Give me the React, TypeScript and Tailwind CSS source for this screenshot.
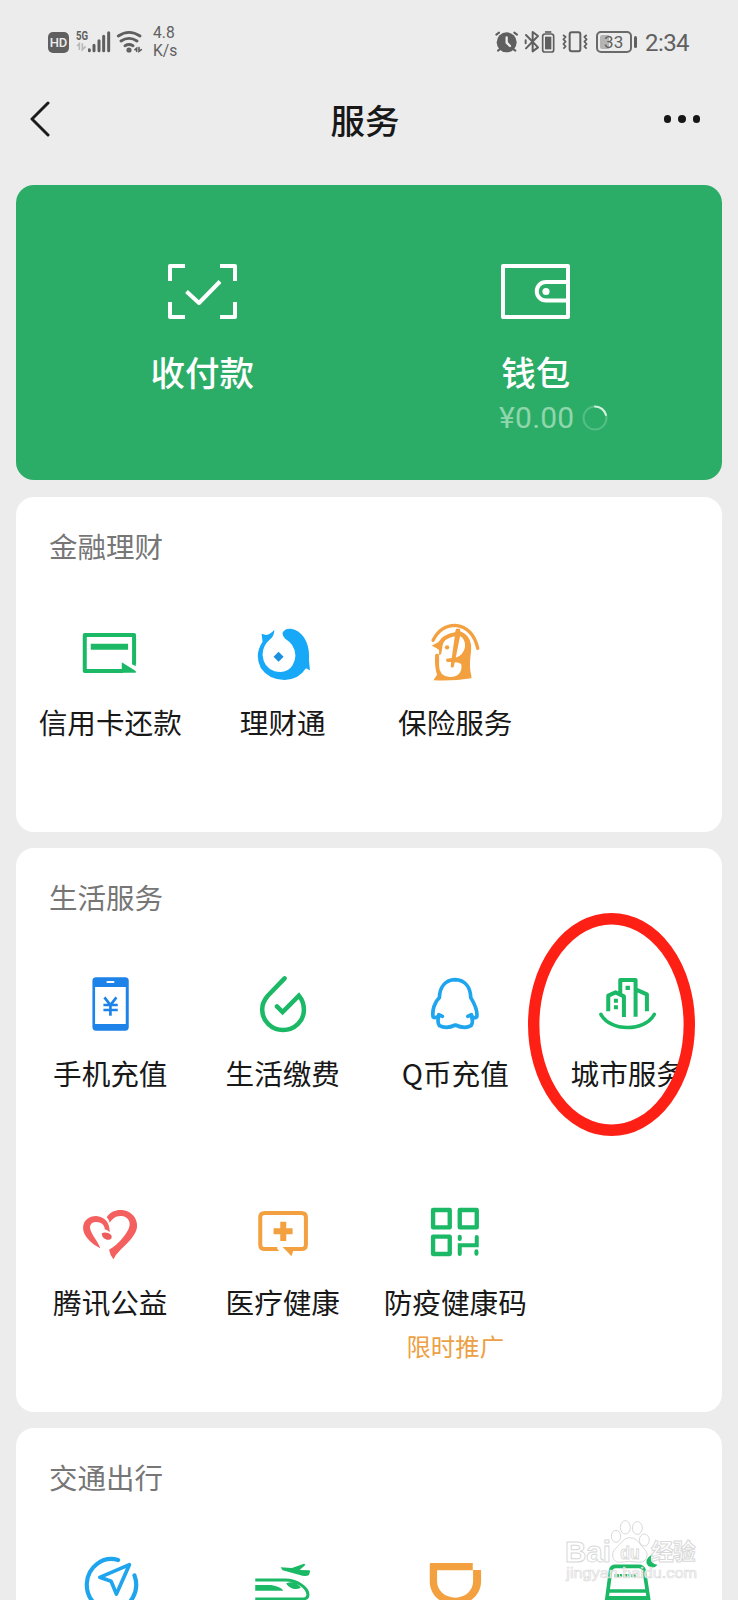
import type { ReactNode } from "react";

interface IconProps {
  viewBox: string;
  children: ReactNode;
}

const ServiceIcon = ({ viewBox, children }: IconProps) => (
  <svg viewBox={viewBox} className="h-[60px] w-[60px] overflow-visible" fill="none">
    {children}
  </svg>
);

const GREEN = "#1bb866";
const BLUE = "#1ea5ee";
const ORANGE = "#f3a040";

const CreditCardIcon = () => (
  <ServiceIcon viewBox="150.75 72 180 180">
    <path d="M313 193V105H165V213H280" stroke={GREEN} strokeWidth="12" strokeLinejoin="round" />
    <path d="M183 131H295V149H183Z" fill={GREEN} />
    <path d="M276 187L318 213V218H270V207H276Z" fill={GREEN} />
    <path d="M307 185L318 192V199L307 193Z" fill={GREEN} />
  </ServiceIcon>
);

const WealthIcon = () => (
  <ServiceIcon viewBox="668.25 72 180 180">
    <path
      d="M694 101L707 105Q722 102 732 89Q733 108 718 119Q696 138 697 166Q700 203 733 214Q770 223 787 196Q805 164 785 134Q777 124 765 116Q754 106 758 96Q765 85 782 86Q806 90 821 112Q839 141 836 178L839 211L827 205Q806 239 763 240Q716 240 692 205Q671 164 697 125Z"
      fill="#18a8f8"
    />
    <path d="M745 155L760 170L745 185L730 170Z" fill="#1b8fe0" />
  </ServiceIcon>
);

const InsuranceIcon = () => (
  <ServiceIcon viewBox="375.75 72 180 180">
    <path d="M400 121Q422 76 467 76Q520 82 534 145" stroke={ORANGE} strokeWidth="10" strokeLinecap="round" />
    <path
      d="M396 137L416 126Q430 103 466 97L469 86L481 86L481 94Q508 103 514 134Q515 152 512 170Q508 205 515 227V235Q460 244 401 241L412 224Q404 202 406 164Q412 158 418 164V150Q410 143 396 137Z"
      fill={ORANGE}
    />
    <path
      d="M428 139Q431 115 465 109L456 174L440 176Q437 182 442 186H454L453 200Q457 205 462 200L465 187Q482 188 485 194Q488 230 450 231Q418 228 418 197V165L424 163Q427 150 428 139Z"
      fill="#fff"
    />
    <path d="M481 108Q497 117 496 140Q492 164 468 173Z" fill="#fff" />
    <circle cx="442" cy="142" r="6.5" fill={ORANGE} />
  </ServiceIcon>
);

const PhoneIcon = () => (
  <ServiceIcon viewBox="150.75 75 180 180">
    <rect x="188" y="82" width="109" height="160" rx="11" fill="#1e83e8" />
    <path d="M196 111H288V222H196Z" fill="#fff" />
    <path d="M233 96H251" stroke="#fff" strokeWidth="6" strokeLinecap="round" />
    <path d="M224 142L242 165L260 142M242 165V197M221 165H264M221 180H264" stroke="#1e83e8" strokeWidth="8" />
  </ServiceIcon>
);

const UtilityIcon = () => (
  <ServiceIcon viewBox="668.25 75 180 180">
    <path
      d="M763 85L712 138C698 155 695 166 696 180A62.500 60 0 0 0 821 180Q821 155 806 137L757 186L740 169"
      stroke={GREEN}
      strokeWidth="13.5"
      strokeLinecap="round"
    />
  </ServiceIcon>
);

const QCoinIcon = () => (
  <ServiceIcon viewBox="165.75 225 180 180">
    <path
      d="M256 239C226 240 210 262 209 293C194 306 187 330 190 351Q195 356 208 347Q201 365 209 377Q230 388 257 375Q284 388 304 377Q312 365 304 347Q315 357 321 351Q325 329 303 293C302 262 286 240 256 239Z"
      stroke={BLUE}
      strokeWidth="11"
      strokeLinejoin="round"
    />
    <path d="M207 344L218 349M305 344L294 349" stroke={BLUE} strokeWidth="11" strokeLinecap="round" />
  </ServiceIcon>
);

const CityIcon = () => (
  <ServiceIcon viewBox="683.25 225 180 180">
    <path
      d="M714 334V287L736 277L761 289V351M750 281V240H796V350M796 268L830 283V334"
      stroke={GREEN}
      strokeWidth="12"
      strokeLinejoin="round"
    />
    <path d="M692 343C719 395 823 397 852 343" stroke={GREEN} strokeWidth="10.5" strokeLinecap="round" />
    <path d="M731 296H743V308H731ZM731 316H743V328H731ZM766 257H779V270H766Z" fill={GREEN} />
  </ServiceIcon>
);

const CharityIcon = () => (
  <ServiceIcon viewBox="150.75 42 180 180">
    <path
      d="M212 175C186 162 158 137 160 111C162 90 178 78 199 78C224 80 240 96 240 127Q233 119 225 118C225 104 212 95 199 96C186 96 180 104 181 114C183 132 203 151 212 175Z"
      fill="#f4605f"
    />
    <path
      d="M231 82C242 64 262 58 282 61C307 66 322 85 322 108C322 132 296 157 271 181Q257 195 251 208Q241 196 238 179C258 170 294 133 299 109C303 92 292 79 275 78C256 77 247 88 240 98Q237 88 231 82Z"
      fill="#f4605f"
    />
    <path d="M216 130Q224 125 235 129Q249 134 245 145Q240 153 226 147Q216 142 216 130Z" fill="#ee5b5b" />
  </ServiceIcon>
);

const MedicalIcon = () => (
  <ServiceIcon viewBox="668.25 42 180 180">
    <path d="M741 177H704Q690 177 690 164V82Q690 69 704 69H813Q827 69 827 82V164Q827 177 813 177H775" stroke={ORANGE} strokeWidth="12" />
    <path d="M757 171H792L784 199Z" fill={ORANGE} />
    <path d="M735 171L747 183H735Z" fill={ORANGE} />
    <path d="M759 95V153M730 124H787" stroke={ORANGE} strokeWidth="18" />
  </ServiceIcon>
);

const HealthCodeIcon = () => (
  <ServiceIcon viewBox="195.75 42 180 180">
    <path
      d="M220 60H270V112H220ZM300 60H351V112H300ZM220 140H270V192H220Z"
      stroke={GREEN}
      strokeWidth="13"
      strokeLinejoin="round"
    />
    <path d="M300 192V166H351V141M300 140V147M350 184V191" stroke={GREEN} strokeWidth="12" strokeLinecap="round" />
  </ServiceIcon>
);

const TravelIcon = () => (
  <ServiceIcon viewBox="150.75 345 180 180">
    <path d="M265 360A74 77 0 1 0 314 406" stroke={BLUE} strokeWidth="12.5" strokeLinecap="round" />
    <path d="M299 374L210 412L244 424L260 462Z" stroke={BLUE} strokeWidth="11" strokeLinejoin="round" />
  </ServiceIcon>
);

const TrainIcon = () => (
  <ServiceIcon viewBox="668.25 345 180 180">
    <path d="M675 420H765C800 420 833 444 833 464Q833 477 815 477H675" stroke={GREEN} strokeWidth="9" />
    <path d="M675 435H722Q752 440 759 452H675Z" fill={GREEN} />
    <path d="M768 430Q780 424 795 428L812 442Q806 450 788 446Q771 440 768 430Z" fill={GREEN} />
    <path d="M751 382L785 384L821 371L826 374L808 390L838 391Q841 394 836 405Q826 411 806 404L757 391Z" fill={GREEN} />
  </ServiceIcon>
);

const RideIcon = () => (
  <ServiceIcon viewBox="75.75 165 180 180">
    <path
      d="M94 189H219V210H244V244C244 285 210 314 167 314C122 314 90 285 90 244V193Q90 189 94 189ZM112 211V244C112 272 136 293 167 293C196 293 220 272 220 244V211Z"
      fill={ORANGE}
      fillRule="evenodd"
    />
  </ServiceIcon>
);

const CarIcon = () => (
  <ServiceIcon viewBox="593.25 165 180 180">
    <path d="M618 310L631 212Q633 199 646 199H715Q729 199 732 212L747 310M622 273H742" stroke={GREEN} strokeWidth="11" />
    <path d="M621 288H745V310H621Z" fill={GREEN} />
    <path d="M643 227H709" stroke={GREEN} strokeWidth="10" strokeDasharray="13 3 6 3" />
    <path d="M754 164Q745 190 772 194Q761 208 744 198Q728 180 754 164Z" fill={GREEN} />
  </ServiceIcon>
);

interface Service {
  name: string;
  icon: ReactNode;
  promo?: string;
}

const finance: Service[] = [
  { name: "信用卡还款", icon: <CreditCardIcon /> },
  { name: "理财通", icon: <WealthIcon /> },
  { name: "保险服务", icon: <InsuranceIcon /> },
];

const life: Service[] = [
  { name: "手机充值", icon: <PhoneIcon /> },
  { name: "生活缴费", icon: <UtilityIcon /> },
  { name: "Q币充值", icon: <QCoinIcon /> },
  { name: "城市服务", icon: <CityIcon /> },
  { name: "腾讯公益", icon: <CharityIcon /> },
  { name: "医疗健康", icon: <MedicalIcon /> },
  { name: "防疫健康码", icon: <HealthCodeIcon />, promo: "限时推广" },
];

// Only the top of this row is on screen, so its items carry no labels
const transportIcons = [TravelIcon, TrainIcon, RideIcon, CarIcon];

interface SectionProps {
  title: string;
  children: ReactNode;
}

const Section = ({ title, children }: SectionProps) => (
  <section className="relative mt-4 rounded-[18px] bg-white px-2 pt-[29px]">
    <h2 className="pl-[25px] text-[28.5px] leading-10 text-[#767676]">{title}</h2>
    {children}
  </section>
);

const ServiceGrid = ({ items }: { items: Service[] }) => (
  <div className="mt-[58px] grid auto-rows-[207.5px] grid-cols-4 gap-y-[22px]">
    {items.map((item) => (
      <div key={item.name} className="flex flex-col items-center whitespace-nowrap">
        {item.icon}
        <span className="mt-[18px] text-[28.6px] leading-10 text-[#181818]">{item.name}</span>
        {item.promo && <span className="mt-1 text-[24.4px] leading-10 text-[#eda045]">{item.promo}</span>}
      </div>
    ))}
  </div>
);

const StatusBar = () => (
  <div className="flex h-14 items-end justify-between pr-[49px] pl-12 text-[#606060]">
    <div className="flex h-7 items-center">
      <div className="mt-px flex h-[21px] w-[21px] items-center justify-center rounded-[5px] bg-[#5f5f5f] font-[Roboto] text-[13px] font-medium text-[#ececec]">
        HD
      </div>
      <div className="ml-[7px] flex h-7 w-[35px]">
        <div className="flex w-3 flex-col">
          <span className="mt-[2px] origin-left scale-x-[0.8] font-[Roboto] text-[12px] leading-[12px] font-bold">5G</span>
          <svg viewBox="228 132 36 30" className="h-[10px] w-3" fill="none" stroke="#b9b9b9" strokeWidth="5">
            <path d="M231 144L238 137V156M247 136V155L257 145" />
          </svg>
        </div>
        <svg viewBox="264 84 69 84" className="h-7 w-[23px]" stroke="#5f5f5f" strokeWidth="9" strokeLinecap="round">
          <path d="M268 149V152M282 136V152M297 122V152M311 109V152M326 98V152" />
        </svg>
      </div>
      <svg viewBox="348 84 81 84" className="ml-[5px] h-7 w-[27px]" fill="none" stroke="#5f5f5f" strokeWidth="8.5" strokeLinecap="round">
        <path d="M355 108Q387 86 420 108M363 123Q387 107 411 123M375 137Q387 130 399 137" />
        <circle cx="387" cy="150" r="3.5" />
        <path d="M405 149L410 145V154M417 143V154L424 149" strokeWidth="5" />
      </svg>
      <div className="ml-[10px] font-[Roboto] text-[15.6px] leading-[18px]">
        <div>4.8</div>
        <div>K/s</div>
      </div>
    </div>
    <div className="flex h-7 items-center">
      <svg viewBox="75 84 69 84" className="h-7 w-[23px]" fill="none" strokeLinecap="round">
        <circle cx="110" cy="127" r="30" fill="#5f5f5f" />
        <path d="M79 104L87 98M141 104L133 98M84 152L92 146M136 152L128 146" stroke="#5f5f5f" strokeWidth="6" />
        <path d="M110 112V128L120 138" stroke="#ececec" strokeWidth="7" />
      </svg>
      <svg viewBox="162 84 48 84" className="ml-[6px] h-7 w-4" fill="none" stroke="#5f5f5f" strokeWidth="6" strokeLinejoin="round">
        <path d="M168 105L204 142L188 154V96L204 108L168 145M167 121V130" strokeLinecap="round" />
      </svg>
      <svg viewBox="213 84 42 84" className="ml-px h-7 w-[14px]" fill="none" stroke="#5f5f5f">
        <rect x="218" y="102" width="33" height="54" rx="7" strokeWidth="5" />
        <path d="M225 96H244" strokeWidth="5" />
        <path d="M225 110H244V148H225Z" fill="#5f5f5f" stroke="none" />
      </svg>
      <svg viewBox="273 84 84 84" className="ml-[6px] h-7 w-7" fill="none" stroke="#5f5f5f" strokeLinejoin="round">
        <rect x="299" y="97" width="32" height="57" rx="6" strokeWidth="6" />
        <path d="M279 105L287 111L280 118L287 125L280 132L287 139L280 146M350 105L343 111L350 118L343 125L350 132L343 139L350 146" strokeWidth="5" />
      </svg>
      <div className="ml-[7px] flex items-center">
        <div className="flex h-[22px] w-[36px] items-center rounded-[5px] border-2 border-[#6a6a6a] p-[2px]">
          <div className="h-[14px] w-[9px] shrink-0 rounded-l-[2px] bg-[#b4b4b4]" />
          <span className="-ml-[5px] font-[Roboto] text-[17px] leading-none">33</span>
        </div>
        <div className="ml-[2px] h-3 w-[3px] rounded-sm bg-[#606060]" />
      </div>
      <span className="mt-px ml-[8px] font-[Roboto] text-2xl leading-7 tracking-[-0.6px]">2:34</span>
    </div>
  </div>
);

const TitleBar = () => (
  <header className="grid h-[129px] grid-cols-[1fr_auto_1fr] items-center pr-[38px] pb-[3px] pl-[30px]">
    <svg viewBox="0 0 20 36" className="h-9 w-5" fill="none" stroke="#1c1c1c" strokeWidth="3" strokeLinecap="round" strokeLinejoin="round">
      <path d="M18 2L2 18L18 34" />
    </svg>
    <h1 className="text-[34.5px] leading-none font-medium text-[#181818]">服务</h1>
    <div className="flex justify-end gap-[7px]">
      <span className="h-[7.5px] w-[7.5px] rounded-full bg-[#161616]" />
      <span className="h-[7.5px] w-[7.5px] rounded-full bg-[#161616]" />
      <span className="h-[7.5px] w-[7.5px] rounded-full bg-[#161616]" />
    </div>
  </header>
);

const PayCard = () => (
  <section className="grid h-[295px] grid-cols-2 rounded-[18px] bg-[#2cad67] px-[19.5px] pt-[79px] text-white">
    <div className="flex flex-col items-center">
      <svg viewBox="0 0 69 56" className="h-14 w-[69px]" fill="none" stroke="white" strokeWidth="4" strokeLinejoin="round">
        <path d="M17 2H2V17M52 2H67V17M2 38V53H17M67 38V53H52" />
        <path d="M18.5 27.5L31 39L52 17.5" />
      </svg>
      <span className="mt-[31px] text-[34.5px] leading-10 font-medium">收付款</span>
    </div>
    <div className="flex flex-col items-center">
      <svg viewBox="0 0 69 56" className="h-14 w-[69px]" fill="none" stroke="white" strokeWidth="4" strokeLinejoin="round">
        <path d="M2 2H67V53H2Z" />
        <path d="M67 18H45A9 9 0 0 0 45 36.5H67" />
        <circle cx="45" cy="27.5" r="3.6" fill="white" stroke="none" />
      </svg>
      <span className="mt-[31px] text-[34.5px] leading-10 font-medium">钱包</span>
      <div className="mt-[3px] ml-[36px] flex items-center gap-[8px]">
        <span className="font-[Roboto] text-[30px] leading-[48px] tracking-[0.2px] text-[#8fd6ad]">¥0.00</span>
        <svg viewBox="0 0 26 26" className="h-[26px] w-[26px]" fill="none" strokeWidth="2">
          <circle cx="13" cy="13" r="11.5" stroke="#54bf84" />
          <path d="M13 1.5A11.5 11.5 0 0 1 24 10" stroke="#d5f2e0" strokeLinecap="round" />
        </svg>
      </div>
    </div>
  </section>
);

const Watermark = () => (
  <svg viewBox="490 50 414 210" className="absolute top-[1517px] left-[563px] h-[70px] w-[138px]">
    <g fill="#ffffff" fillOpacity="0.8" stroke="#d9d9d9" strokeWidth="3">
      <ellipse cx="649" cy="108" rx="14" ry="18" />
      <ellipse cx="677" cy="81" rx="15" ry="20" />
      <ellipse cx="713" cy="83" rx="15" ry="19" />
      <ellipse cx="734" cy="119" rx="15" ry="18" />
      <path d="M690 112C672 112 664 130 648 144C630 162 640 186 660 186Q690 180 718 186C742 186 750 162 734 146C718 130 712 112 690 112Z" />
      <text x="496" y="184" fontFamily="Liberation Sans" fontWeight="700" fontSize="90" textLength="138" lengthAdjust="spacingAndGlyphs">Bai</text>
      <text x="662" y="176" fontFamily="Liberation Sans" fontWeight="700" fontSize="54" textLength="58" lengthAdjust="spacingAndGlyphs">du</text>
      <text x="754" y="180" fontFamily="Noto Sans CJK SC" fontWeight="700" fontSize="68" textLength="134">经验</text>
    </g>
    <text
      x="500"
      y="234"
      fontFamily="Liberation Sans"
      fontSize="44"
      textLength="392"
      lengthAdjust="spacingAndGlyphs"
      fill="#ffffff"
      fillOpacity="0.85"
      stroke="#dcdcdc"
      strokeWidth="2"
    >
      jingyan.baidu.com
    </text>
  </svg>
);

const App = () => {
  return (
    <div className="relative h-[1600px] w-[738px] overflow-hidden bg-[#ececec] font-['Noto_Sans_CJK_SC',sans-serif]">
      <StatusBar />
      <TitleBar />
      <main className="px-4">
        <PayCard />
        <div className="h-px" />
        <Section title="金融理财">
          <ServiceGrid items={finance} />
        </Section>
        <Section title="生活服务">
          <ServiceGrid items={life} />
          {/* Highlight ring around 城市服务 */}
          <svg viewBox="0 0 167 223" className="absolute top-[65px] left-[512px] h-[223px] w-[167px]" fill="none">
            <ellipse cx="83.5" cy="111.5" rx="77.8" ry="105.8" stroke="#ff2015" strokeWidth="11.4" />
          </svg>
        </Section>
        <Section title="交通出行">
          <div className="mt-[58px] grid h-[208px] grid-cols-4 justify-items-center">
            {transportIcons.map((Icon, i) => (
              <Icon key={i} />
            ))}
          </div>
        </Section>
      </main>
      <Watermark />
    </div>
  );
};

export default App;
